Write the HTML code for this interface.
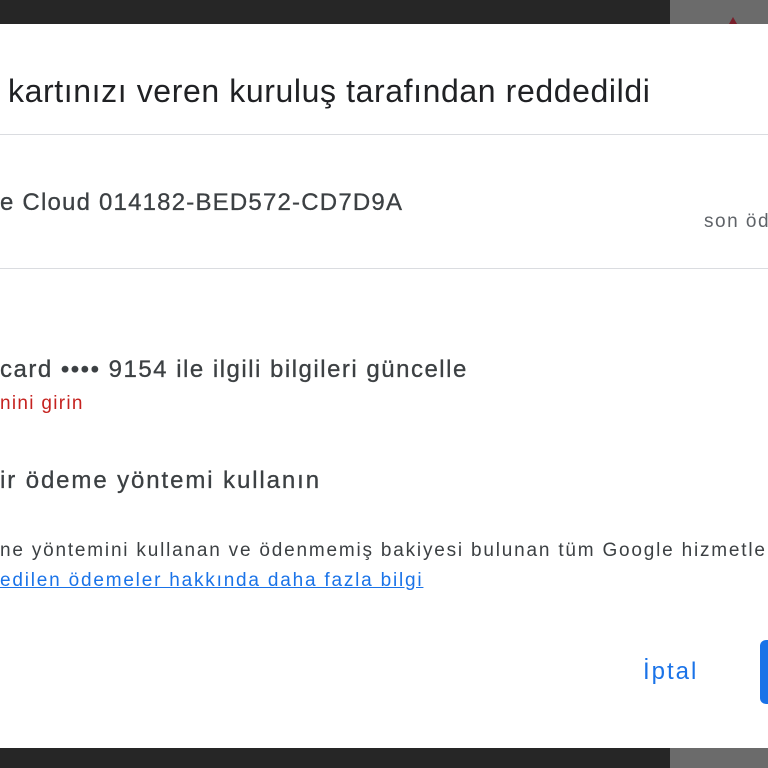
<!DOCTYPE html>
<html><head><meta charset="utf-8"><style>
html,body{margin:0;padding:0;width:768px;height:768px;overflow:hidden;background:#fff;font-family:"Liberation Sans","DejaVu Sans",sans-serif;}
.t{position:absolute;white-space:nowrap;color:#3c4043;}
</style></head><body>
<div style="position:absolute;left:0;top:0;width:670px;height:24px;background:#262626"></div>
<div style="position:absolute;left:670px;top:0;width:98px;height:24px;background:#6b6b6b"></div>
<div style="position:absolute;left:729px;top:17px;width:0;height:0;border-left:4px solid transparent;border-right:4px solid transparent;border-bottom:7px solid #7a1f2a"></div>
<div style="position:absolute;left:0;top:748px;width:670px;height:20px;background:#262626"></div>
<div style="position:absolute;left:670px;top:748px;width:98px;height:20px;background:#6b6b6b"></div>

<div class="t" style="left:8px;top:73px;font-size:32px;color:#202124;letter-spacing:0.6px">kartınızı veren kuruluş tarafından reddedildi</div>
<div style="position:absolute;left:0;top:134px;width:768px;height:1px;background:#dadce0"></div>
<div class="t" style="left:0;top:189px;font-size:24px;color:#3c4043;letter-spacing:1.2px;-webkit-text-stroke:0.3px #3c4043">e Cloud 014182-BED572-CD7D9A</div>
<div class="t" style="left:704px;top:211px;font-size:19px;color:#5f6368;letter-spacing:1.5px">son öd</div>
<div style="position:absolute;left:0;top:268px;width:768px;height:1px;background:#dadce0"></div>
<div class="t" style="left:0;top:356px;font-size:24px;color:#3c4043;letter-spacing:1.5px;-webkit-text-stroke:0.3px #3c4043">card •••• 9154 ile ilgili bilgileri güncelle</div>
<div class="t" style="left:0;top:393px;font-size:19px;color:#c5221f;letter-spacing:1.3px">nini girin</div>
<div class="t" style="left:0;top:467px;font-size:24px;color:#3c4043;letter-spacing:1.9px;-webkit-text-stroke:0.3px #3c4043">ir ödeme yöntemi kullanın</div>
<div class="t" style="left:0;top:540px;font-size:19px;color:#3c4043;letter-spacing:1.8px">ne yöntemini kullanan ve ödenmemiş bakiyesi bulunan tüm Google hizmetle</div>
<div class="t" style="left:0;top:570px;font-size:19px;color:#1a73e8;text-decoration:underline;letter-spacing:1.8px">edilen ödemeler hakkında daha fazla bilgi</div>
<div class="t" style="left:643px;top:658px;font-size:24px;color:#1a73e8;letter-spacing:2px">İptal</div>
<div style="position:absolute;left:760px;top:640px;width:30px;height:64px;background:#1a73e8;border-radius:6px"></div>
</body></html>
